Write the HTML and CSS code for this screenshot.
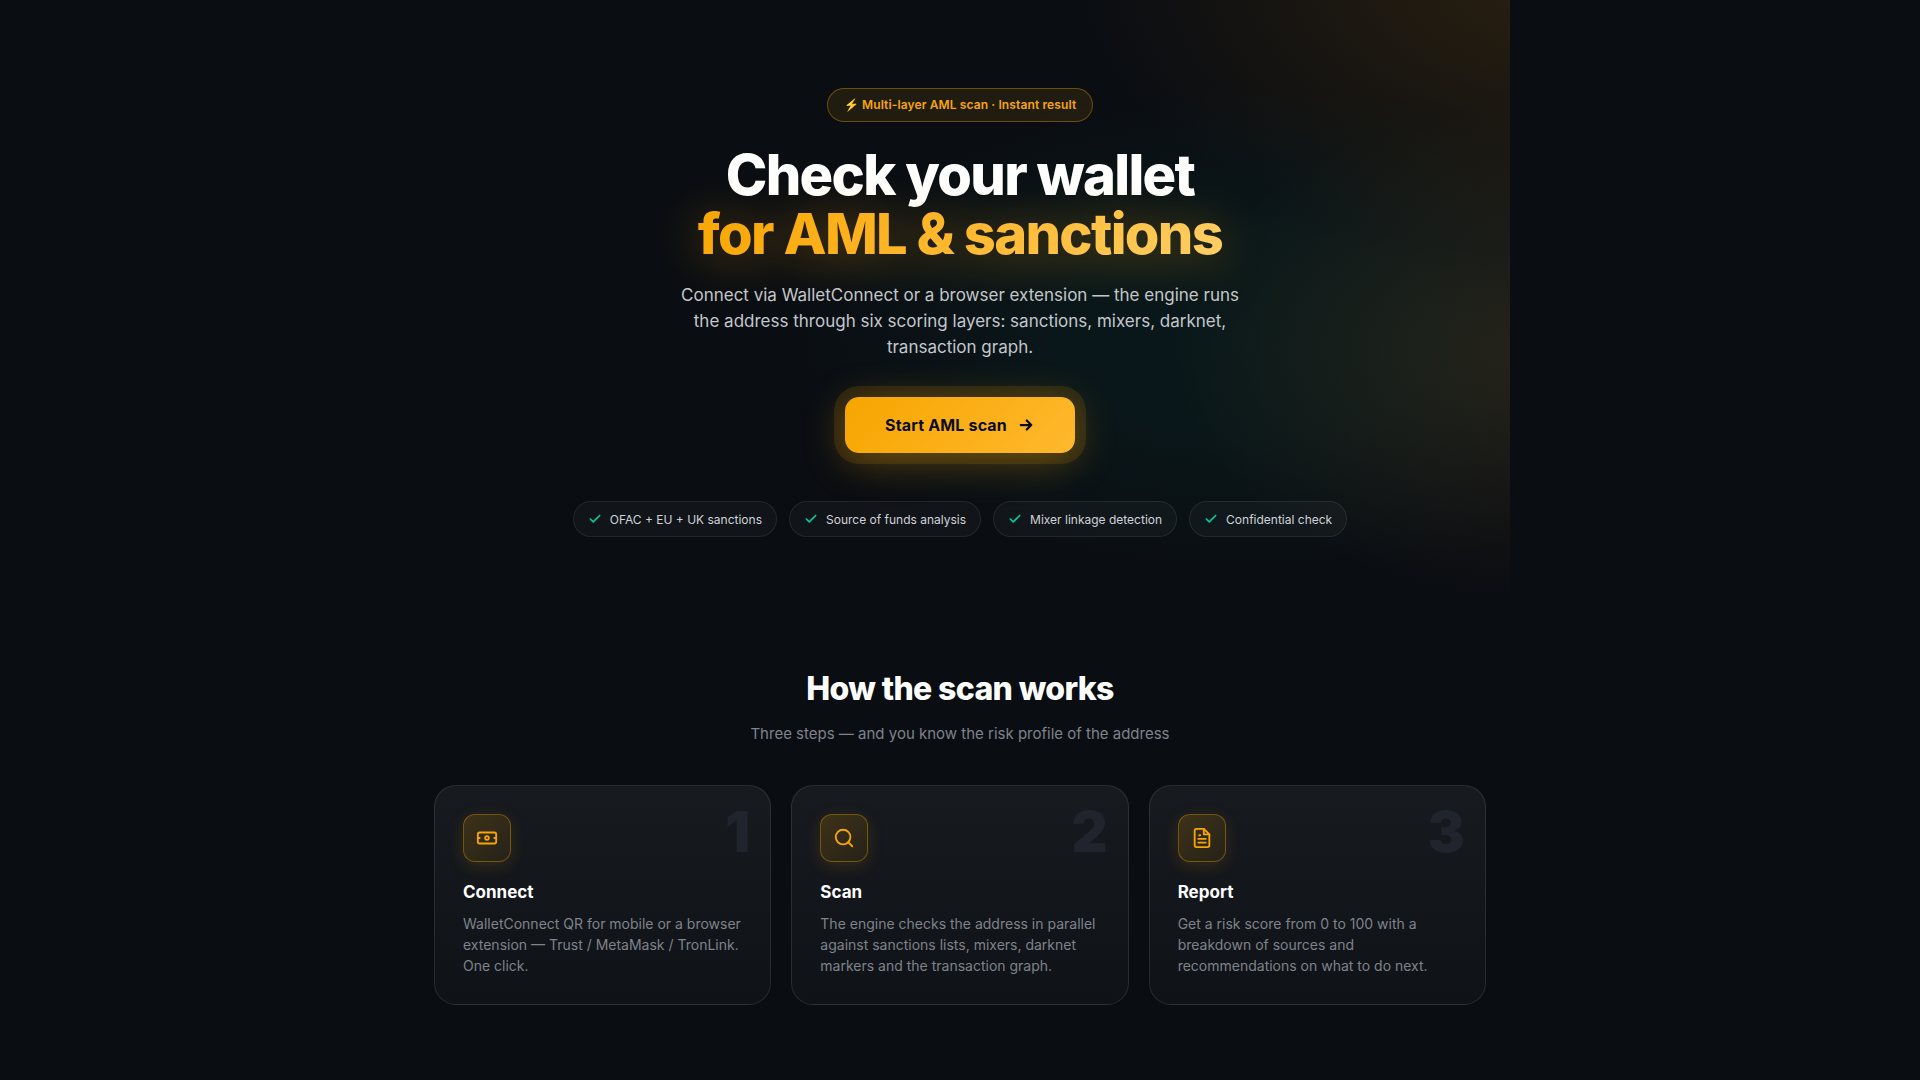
FILE: index.html
```html
<!DOCTYPE html>
<html lang="en">
<head>
    <meta charset="UTF-8">
    <meta name="viewport" content="width=device-width, initial-scale=1.0">
    <title>AML wallet check</title>
    <link rel="stylesheet" href="styles.css">
</head>
<body>
    <main class="page">
        <section class="hero">
            <span class="badge">⚡ Multi-layer AML scan · Instant result</span>
            <h1>Check your wallet<br><span class="accent">for AML &amp; sanctions</span></h1>
            <p class="lead">Connect via WalletConnect or a browser extension — the engine runs the address through six scoring layers: sanctions, mixers, darknet, transaction graph.</p>
            <button type="button" class="cta">
                Start AML scan
                <svg width="18" height="18" viewBox="0 0 24 24" fill="none" stroke="currentColor" stroke-width="3" stroke-linecap="round" stroke-linejoin="round"><path d="M5 12h14M13 6l6 6-6 6"/></svg>
            </button>
            <ul class="pills">
                <li><svg viewBox="0 0 24 24"><path d="M20 6L9 17l-5-5"/></svg>OFAC + EU + UK sanctions</li>
                <li><svg viewBox="0 0 24 24"><path d="M20 6L9 17l-5-5"/></svg>Source of funds analysis</li>
                <li><svg viewBox="0 0 24 24"><path d="M20 6L9 17l-5-5"/></svg>Mixer linkage detection</li>
                <li><svg viewBox="0 0 24 24"><path d="M20 6L9 17l-5-5"/></svg>Confidential check</li>
            </ul>
        </section>

        <section class="steps">
            <h2>How the scan works</h2>
            <p class="sub">Three steps — and you know the risk profile of the address</p>
            <div class="cards">
                <article class="card">
                    <span class="num">1</span>
                    <div class="icon">
                        <svg viewBox="0 0 24 24"><rect x="2" y="6" width="20" height="12" rx="2"/><circle cx="12" cy="12" r="2"/><path d="M2 12h2M20 12h2"/></svg>
                    </div>
                    <h3>Connect</h3>
                    <p>WalletConnect QR for mobile or a browser extension — Trust / MetaMask / TronLink. One click.</p>
                </article>
                <article class="card">
                    <span class="num">2</span>
                    <div class="icon">
                        <svg viewBox="0 0 24 24"><circle cx="11" cy="11" r="8"/><path d="M21 21l-4.35-4.35"/></svg>
                    </div>
                    <h3>Scan</h3>
                    <p>The engine checks the address in parallel against sanctions lists, mixers, darknet markers and the transaction graph.</p>
                </article>
                <article class="card">
                    <span class="num">3</span>
                    <div class="icon">
                        <svg viewBox="0 0 24 24"><path d="M14 2H6a2 2 0 0 0-2 2v16a2 2 0 0 0 2 2h12a2 2 0 0 0 2-2V8z"/><path d="M14 2v6h6M16 13H8M16 17H8M10 9H9"/></svg>
                    </div>
                    <h3>Report</h3>
                    <p>Get a risk score from 0 to 100 with a breakdown of sources and recommendations on what to do next.</p>
                </article>
            </div>
        </section>
    </main>
</body>
</html>
```
FILE: styles.css
```css
* { box-sizing: border-box; margin: 0; padding: 0; }
body { font-family: Inter, sans-serif; background: #0a0d12; color: #fff; min-height: 100vh; }
.page { max-width: 1100px; margin: 0 auto; }

/* hero */
.hero { position: relative; overflow: hidden; display: flex; flex-direction: column; align-items: center; padding: 88px 24px 60px; text-align: center; }
.hero::before {
    content: ""; position: absolute; inset: 0; z-index: -1;
    background:
        radial-gradient(ellipse 500px 280px at 106% -4%, rgba(247, 150, 0, 0.14), transparent),
        radial-gradient(ellipse 380px 250px at 104% 59%, rgba(247, 150, 40, 0.12), transparent),
        radial-gradient(ellipse 480px 250px at 76% 56%, rgba(0, 200, 160, 0.06), rgba(0, 200, 160, 0.05) 40%, transparent);
}
.badge { padding: 8px 16px; border: 1px solid rgba(247, 166, 0, 0.35); border-radius: 17px; background: rgba(247, 166, 0, 0.1); color: #f7a600; font-size: 12px; font-weight: 600; line-height: 16px; letter-spacing: 0.01em; }
h1 { margin-top: 24px; font-size: 56px; font-weight: 800; line-height: 59px; letter-spacing: -0.03em; }
.accent { background: linear-gradient(135deg, #f7a600, #ffb82e 50%, #ffcf66); -webkit-background-clip: text; background-clip: text; color: transparent; filter: drop-shadow(0 4px 24px rgba(247, 166, 0, 0.4)); }
.lead { max-width: 580px; margin-top: 18px; color: #c4c7cc; font-size: 17px; line-height: 26px; }
.cta { display: flex; align-items: center; gap: 10px; height: 56px; margin-top: 37px; padding: 0 40px; border: 0; border-radius: 14px; background: linear-gradient(135deg, #f7a600, #ffb82e); color: #0a0d12; font-family: inherit; font-size: 16px; font-weight: 700; letter-spacing: 0.01em; cursor: pointer; box-shadow: 0 0 0 11px rgba(247, 166, 0, 0.12), 0 8px 40px rgba(247, 166, 0, 0.35); }
.pills { display: flex; flex-wrap: wrap; justify-content: center; gap: 12px; margin-top: 48px; list-style: none; }
.pills li { display: flex; align-items: center; gap: 8px; height: 36px; padding: 0 14px; border: 1px solid rgba(255, 255, 255, 0.08); border-radius: 18px; background: rgba(255, 255, 255, 0.03); color: #d0d3d8; font-size: 12px; }
.pills svg { width: 14px; height: 14px; fill: none; stroke: #00c896; stroke-width: 3; stroke-linecap: round; stroke-linejoin: round; }

/* steps */
.steps { padding: 73px 24px; text-align: center; }
h2 { font-size: 32px; font-weight: 800; line-height: 38px; letter-spacing: -0.02em; }
.sub { margin-top: 15px; color: #7f838c; font-size: 15px; line-height: 22px; }
.cards { display: grid; grid-template-columns: repeat(3, 1fr); gap: 20px; margin-top: 40px; text-align: left; }
.card { position: relative; padding: 28px; border: 1px solid rgba(255, 255, 255, 0.1); border-radius: 22px; background: linear-gradient(180deg, #171a1f, #0f1216); }
.num { position: absolute; top: 12px; right: 20px; color: #20242d; font-size: 56px; font-weight: 900; line-height: 68px; }
.icon { display: flex; align-items: center; justify-content: center; width: 48px; height: 48px; border: 1px solid rgba(247, 166, 0, 0.35); border-radius: 12px; background: linear-gradient(135deg, rgba(247, 166, 0, 0.18), rgba(247, 166, 0, 0.08)); box-shadow: 0 4px 16px rgba(247, 166, 0, 0.15); }
.icon svg { width: 22px; height: 22px; fill: none; stroke: #f7a600; stroke-width: 2; stroke-linecap: round; stroke-linejoin: round; }
h3 { margin-top: 19px; font-size: 17px; font-weight: 700; line-height: 22px; }
.card p { margin-top: 10px; color: #7f838c; font-size: 14px; line-height: 21px; }

@media (max-width: 800px) {
    .cards { grid-template-columns: 1fr; }
    h1 { font-size: 40px; line-height: 44px; }
}
```
